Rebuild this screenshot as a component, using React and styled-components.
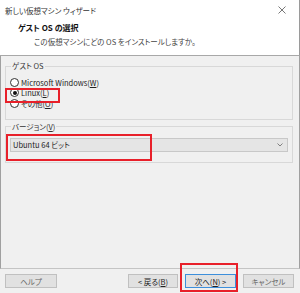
import React from 'react';
import styled, { createGlobalStyle } from 'styled-components';

const Global = createGlobalStyle`
  html, body { margin: 0; padding: 0; background: #f0f0f0; }
  body {
    font-family: "Noto Sans CJK JP", "Noto Sans", sans-serif;
    font-size: 7.5px;
    color: #222;
    font-feature-settings: "palt";
  }
  #root { width: 300px; height: 293px; }
`;

const Window = styled.div`
  position: relative;
  width: 300px;
  height: 293px;
  display: flex;
  flex-direction: column;
  background: #f0f0f0;
  overflow: hidden;
`;

const Header = styled.header`
  height: 56px;
  box-sizing: border-box;
  background: #fff;
  border-bottom: 1px solid #a8a8a8;
  border-right: 1px solid #9a9a9a;
  display: flex;
  flex-direction: column;
`;

const TitleBar = styled.div`
  height: 20px;
  display: flex;
  align-items: center;
  justify-content: space-between;
  padding: 0 13px 0 5px;
  color: #333;
`;

const Heading = styled.div`
  margin-top: 1px;
  height: 14px;
  line-height: 14px;
  padding-left: 18px;
  font-weight: bold;
  font-size: 8px;
  color: #111;
`;

const Sub = styled.div`
  height: 14px;
  line-height: 14px;
  padding-left: 34px;
  color: #444;
`;

const Body = styled.main`
  flex: 1;
  border-left: 1px solid #a0a0a0;
  border-right: 1px solid #a0a0a0;
  border-bottom: 1px solid #c4c4c4;
  padding: 0 6px 0 4px;
  display: flex;
  flex-direction: column;
`;

const Group = styled.fieldset`
  margin: ${p => p.$top}px 0 0 0;
  padding: ${p => p.$pad};
  border: 1px solid #d8d8d8;
  min-width: 0;
  display: flex;
  flex-direction: column;
`;

const Legend = styled.legend`
  margin-left: 1px;
  padding: 0 1px;
  line-height: 10px;
  color: #333;
`;

const RadioRow = styled.label`
  height: 10.5px;
  display: flex;
  align-items: center;
  gap: 2px;
  color: #222;
`;

const RadioDot = styled.span`
  width: 9px;
  height: 9px;
  box-sizing: border-box;
  border-radius: 50%;
  border: 1px solid #333;
  background: #fff;
  display: flex;
  align-items: center;
  justify-content: center;
  &::after {
    content: "";
    width: 4px;
    height: 4px;
    border-radius: 50%;
    background: ${p => (p.$on ? '#111' : 'transparent')};
  }
`;

const Select = styled.div`
  height: 14px;
  box-sizing: border-box;
  background: #e5e5e5;
  border: 1px solid #c8c8c8;
  display: flex;
  align-items: center;
  justify-content: space-between;
  padding: 0 4px 0 2px;
  color: #222;
`;

const Footer = styled.footer`
  height: 24px;
  display: flex;
  align-items: flex-start;
  padding: 5px 6px 0 5px;
  box-sizing: border-box;
`;

const Button = styled.div`
  width: ${p => p.$w}px;
  height: 14px;
  box-sizing: border-box;
  margin-left: ${p => p.$ml || 0}px;
  background: #e1e1e1;
  border: 1px solid ${p => (p.$def ? '#3d8fdb' : '#c0c0c0')};
  color: ${p => (p.$dim ? '#666' : '#222')};
  display: flex;
  align-items: center;
  justify-content: center;
`;

const Mark = styled.div`
  position: absolute;
  left: ${p => p.$x}px;
  top: ${p => p.$y}px;
  width: ${p => p.$w}px;
  height: ${p => p.$h}px;
  box-sizing: border-box;
  border: 2px solid #e8202a;
  pointer-events: none;
`;

const U = styled.span`text-decoration: underline;`;

export default function App() {
  return (
    <>
      <Global />
      <Window>
        <Header>
          <TitleBar>
            <span>新しい仮想マシン ウィザード</span>
            <svg width="8" height="8" viewBox="0 0 8 8">
              <path d="M0.5 0.5 L7.5 7.5 M7.5 0.5 L0.5 7.5" stroke="#555" strokeWidth="0.8" />
            </svg>
          </TitleBar>
          <Heading>ゲスト OS の選択</Heading>
          <Sub>この仮想マシンにどの OS をインストールしますか。</Sub>
        </Header>
        <Body>
          <Group $top={5} $pad="6px 0 10px 4px">
            <Legend>ゲスト OS</Legend>
            <RadioRow><RadioDot /><span>Microsoft Windows(<U>W</U>)</span></RadioRow>
            <RadioRow><RadioDot $on /><span>Linux(<U>L</U>)</span></RadioRow>
            <RadioRow><RadioDot /><span>その他(<U>O</U>)</span></RadioRow>
          </Group>
          <Group $top={2} $pad="6px 4px 10px 4px">
            <Legend>バージョン(<U>V</U>)</Legend>
            <Select>
              <span>Ubuntu 64 ビット</span>
              <svg width="6" height="4" viewBox="0 0 6 4">
                <path d="M0.5 0.5 L3 3 L5.5 0.5" fill="none" stroke="#666" strokeWidth="0.8" />
              </svg>
            </Select>
          </Group>
        </Body>
        <Footer>
          <Button $w={52} $dim><span>ヘルプ</span></Button>
          <Button $w={50} $ml={71}><span>&lt; 戻る(<U>B</U>)</span></Button>
          <Button $w={51} $ml={7} $def><span>次へ(<U>N</U>) &gt;</span></Button>
          <Button $w={51} $ml={7} $dim><span>キャンセル</span></Button>
        </Footer>
        <Mark $x={5} $y={88} $w={55} $h={15} />
        <Mark $x={6} $y={134} $w={146} $h={27} />
        <Mark $x={180} $y={263} $w={58} $h={29} />
      </Window>
    </>
  );
}
